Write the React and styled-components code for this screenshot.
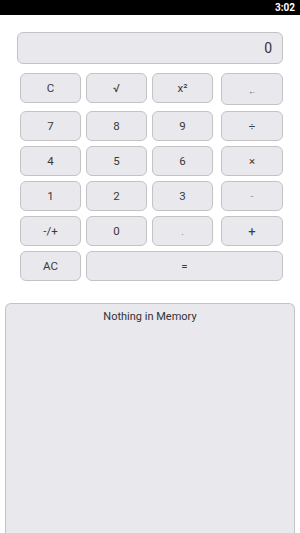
import React from 'react';
import styled, { createGlobalStyle } from 'styled-components';

const GlobalStyle = createGlobalStyle`
  html, body {
    margin: 0;
    padding: 0;
    background: #fff;
    font-family: Roboto, "Liberation Sans", sans-serif;
  }
`;

const Screen = styled.div`
  width: 300px;
  height: 533px;
  display: flex;
  flex-direction: column;
  overflow: hidden;
  background: #fff;
`;

const StatusBar = styled.div`
  height: 15px;
  background: #000;
  color: #fff;
  display: flex;
  align-items: center;
  justify-content: flex-end;
  padding-right: 5px;
  font-size: 10px;
  font-weight: bold;
`;

const Display = styled.div`
  margin: 17px 17px 0 17px;
  height: 30px;
  background: #e9e8ed;
  border: 1px solid #c3c3c6;
  border-radius: 6px;
  display: flex;
  align-items: center;
  justify-content: flex-end;
  padding-right: 10px;
  font-size: 14px;
  color: #333;
`;

const Keypad = styled.div`
  display: grid;
  grid-template-columns: repeat(3, 61px) 65px;
  grid-template-rows: 33px repeat(5, 30px);
  column-gap: 5px;
  row-gap: 5px;
  padding: 9px 0 0 20px;
`;

const Key = styled.button`
  box-sizing: border-box;
  height: ${(p) => (p.$tall ? 32 : 30)}px;
  width: ${(p) => (p.$op ? '62px' : '100%')};
  justify-self: ${(p) => (p.$op ? 'end' : 'stretch')};
  align-self: start;
  grid-column: ${(p) => p.$span || 'auto'};
  background: #e9e8ed;
  border: 1px solid #c3c3c6;
  border-radius: 6px;
  font-family: Roboto, "Liberation Sans", sans-serif;
  font-weight: 400;
  font-size: ${(p) => p.$size || 11.5}px;
  color: ${(p) => (p.$faint ? '#a0a0a0' : '#3a3a3a')};
  padding: 0;
  display: flex;
  align-items: center;
  justify-content: center;
`;

const Memory = styled.div`
  margin: 22px 5px 0 5px;
  flex: 1;
  background: #e9e8ed;
  border: 1px solid #c3c3c6;
  border-bottom: none;
  border-radius: 6px 6px 0 0;
  display: flex;
  justify-content: center;
  padding-top: 6px;
  font-size: 11px;
  color: #333;
`;

export default function App() {
  return (
    <Screen>
      <GlobalStyle />
      <StatusBar>3:02</StatusBar>
      <Display>0</Display>
      <Keypad>
        <Key>C</Key>
        <Key>√</Key>
        <Key>x²</Key>
        <Key $op $tall $size={8} style={{ paddingTop: 4 }}>
          ←
        </Key>

        <Key>7</Key>
        <Key>8</Key>
        <Key>9</Key>
        <Key $op>÷</Key>

        <Key>4</Key>
        <Key>5</Key>
        <Key>6</Key>
        <Key $op>×</Key>

        <Key>1</Key>
        <Key>2</Key>
        <Key>3</Key>
        <Key $op $faint>-</Key>

        <Key>-/+</Key>
        <Key>0</Key>
        <Key $faint>.</Key>
        <Key $op $size={13}>+</Key>

        <Key>AC</Key>
        <Key $span="2 / 5">=</Key>
      </Keypad>
      <Memory>Nothing in Memory</Memory>
    </Screen>
  );
}
